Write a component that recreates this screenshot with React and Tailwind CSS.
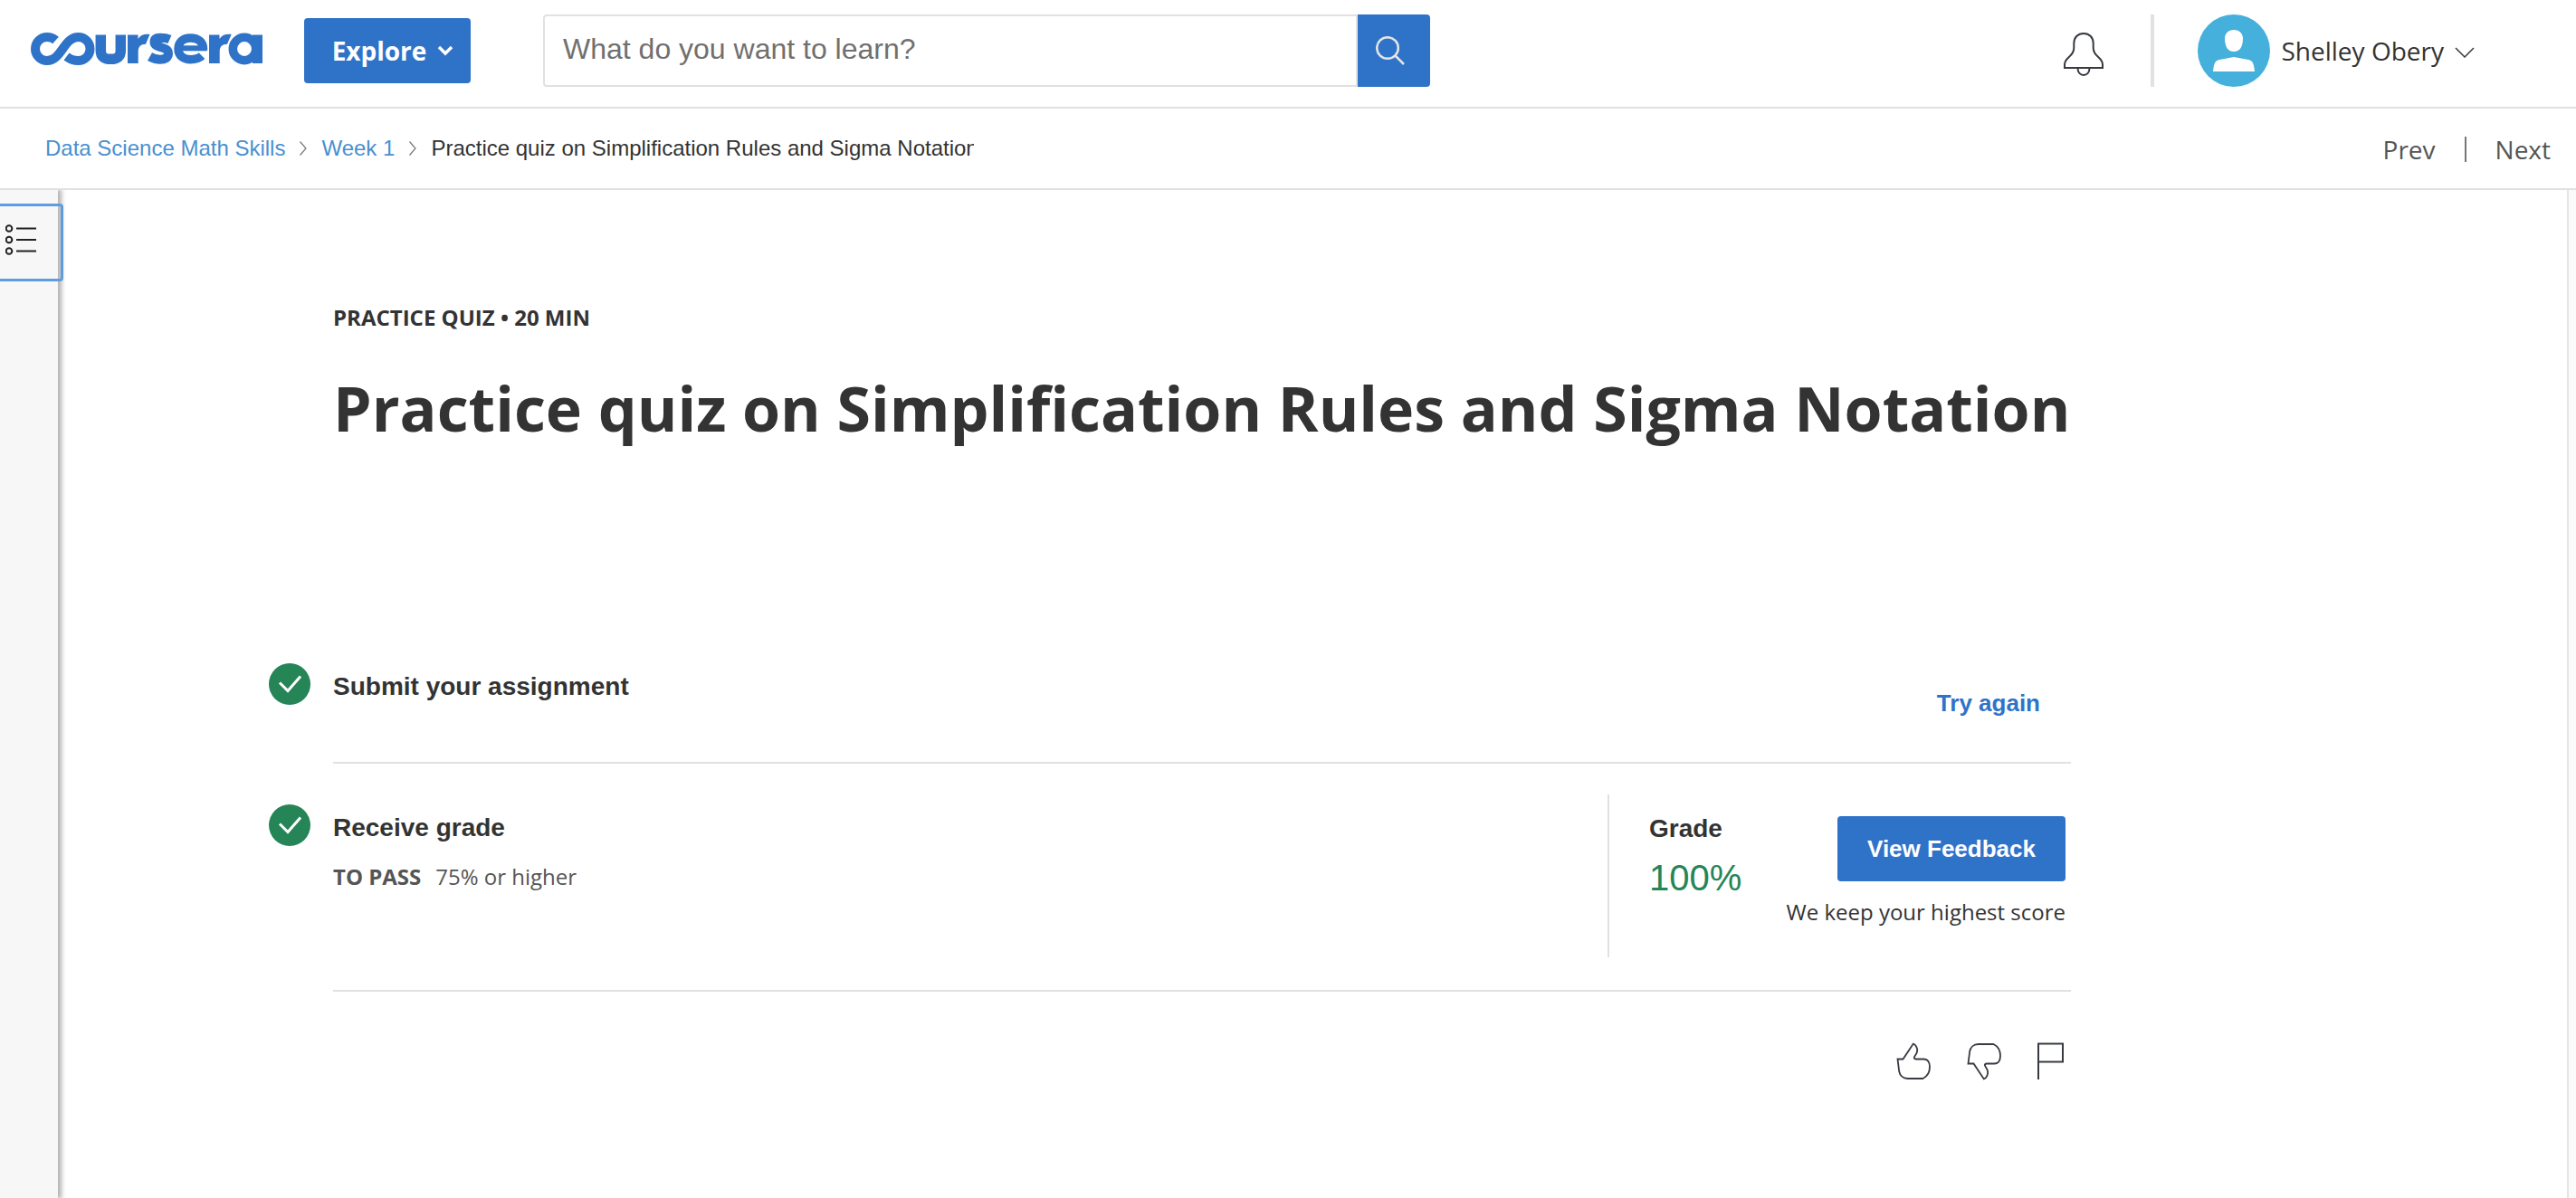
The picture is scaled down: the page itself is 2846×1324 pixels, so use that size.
function Logo() {
  return (
    <svg viewBox="0 0 256 36" className="h-9 w-64" fill="none" stroke="#2f73c9" aria-label="coursera" role="img">
      <path d="M27.500 8.500C25 6.200 22 5 18 5A13 13 0 1 0 18 31C34 31 36.500 5 52.500 5A13 13 0 1 1 52.500 31C47.500 31 43.500 29.500 39.500 26.500" strokeWidth="10" />
      <path d="M77.300 2.500V20c0 6.300 3.500 9.300 11 9.300s11-3 11-9.300V2.500" strokeWidth="11.500" />
      <path d="M107 2.500H118.500V7C121 3 125 1.300 131.500 2L127 12.700C121.500 12.700 118.700 15.500 118.700 21V34H107Z" fill="#2f73c9" stroke="none" />
      <path d="M153.500 7.500C150 6 146.500 5.700 143 5.700c-5 0-6.500 2-6.500 4.800 0 7.500 15.500 4 15.500 12.500 0 5-4 6.700-9 6.700-4 0-8-1-11.500-3" strokeWidth="10" />
      <path d="M190.500 19.500V18C190.500 10.500 185 6 176.500 6S163 10.500 163 18s5.500 11.700 13.500 11.700c5.500 0 9.500-1 12.500-4" strokeWidth="9.500" />
      <path d="M164 17.300H194.500" strokeWidth="6" />
      <path d="M197 2.500H208.500V7C211 3 215 1.300 221.700 2L217 12.700C211.500 12.700 208.700 15.500 208.700 21V34H197Z" fill="#2f73c9" stroke="none" />
      <circle cx="236" cy="18" r="12.700" strokeWidth="9.500" />
      <path d="M250.500 2.500V34" strokeWidth="11" />
    </svg>
  );
}

function Crumb() {
  return (
    <svg viewBox="0 0 8 16" className="h-4 w-2 shrink-0" fill="none" stroke="#777" strokeWidth="1.200" aria-hidden="true">
      <path d="M.5.5 7 8 .5 15.500" />
    </svg>
  );
}

function Check() {
  return (
    <svg viewBox="0 0 46 46" className="size-[46px] shrink-0" role="img" aria-label="Completed">
      <circle cx="23" cy="23" r="23" fill="#258557" />
      <path d="M12 21.500 21 30.500 35 14.500" fill="none" stroke="#fff" strokeWidth="3" />
    </svg>
  );
}

function Thumb({ down }) {
  return (
    <svg viewBox="0 0 38 42" className={down ? "h-[42px] w-[38px] -scale-y-100" : "h-[42px] w-[38px]"} fill="none" stroke="#373a41" strokeWidth="1.800" aria-hidden="true">
      <path d="M1.500 18.500H7.500L18.800 1.500C22 2.800 23.800 7 23 10.500 22.300 13.500 19.500 15.500 19.800 17.300 20 18.200 20.800 18.500 22 18.500H30.500C35 18.500 37 22.500 37 27 37 32.500 34.500 37.500 29.500 40H12.500C7.500 40 4 36.500 3.200 32Z" />
    </svg>
  );
}

export default function App() {
  return (
    <div className="flex min-h-screen flex-col bg-white font-['Open_Sans',sans-serif] text-[#333]">
      <header className="flex items-center border-b-2 border-[#e1e1e1] pt-4 pr-28 pb-[22px] pl-[34px]">
        <a href="#home" className="pb-1"><Logo /></a>
        <button className="ml-[46px] flex h-[72px] w-[184px] shrink-0 items-center justify-center gap-3 rounded bg-[#2f73c9] pl-3 text-[28px] font-bold text-white">
          Explore
          <svg viewBox="0 0 18 12" className="h-3 w-[18px]" fill="none" stroke="#fff" strokeWidth="3.500" aria-hidden="true"><path d="M2 2l7 7 7-7" /></svg>
        </button>
        <form className="ml-20 flex h-20 w-[980px]" role="search">
          <input type="text" aria-label="Search" placeholder="What do you want to learn?" className="min-w-0 flex-1 rounded-l border-2 border-[#e1e1e1] px-5 pb-1 font-['Liberation_Sans',Arial,sans-serif] text-[32px] placeholder:text-[#707070]" />
          <button type="button" aria-label="Search" className="flex w-20 items-center justify-center rounded-r bg-[#2f73c9]">
            <svg viewBox="0 0 32 32" className="mr-2 size-8" fill="none" stroke="#e5e5e5" strokeWidth="2.500" aria-hidden="true"><circle cx="13" cy="13" r="11.800" /><path d="M21.500 21.500 31 31" /></svg>
          </button>
        </form>
        <div className="ml-auto flex items-center">
          <button aria-label="Notifications" className="pt-2">
            <svg viewBox="0 0 44 48" className="h-12 w-11" fill="none" stroke="#373a41" strokeWidth="2" aria-hidden="true">
              <path d="M22 1C15.500 1 11.300 5.500 11.300 12V17C11.300 27 1 27 1 35.500V39H43V35.500C43 27 32.700 27 32.700 17V12C32.700 5.500 28.500 1 22 1ZM15.500 39c0 5 2.800 8 6.500 8s6.500-3 6.500-8" />
            </svg>
          </button>
          <div className="ml-[52px] h-20 w-1 bg-[#e1e1e1]" />
          <button className="ml-12 flex items-center text-[28px]">
            <svg viewBox="0 0 80 80" className="size-20" aria-hidden="true">
              <circle cx="40" cy="40" r="40" fill="#45b0db" />
              <path d="M40 17c-6 0-10 4-10 9.500C30 35 33 41 40 41s10-6 10-14.500C50 21 46 17 40 17ZM40 47l-16 3c-5 1-6 4-7 13h46c-1-9-2-12-7-13Z" fill="#fff" />
            </svg>
            <span className="ml-3">Shelley Obery</span>
            <svg viewBox="0 0 22 12" className="mt-1 ml-3 h-3 w-[22px]" fill="none" stroke="#373a41" strokeWidth="1.500" aria-hidden="true"><path d="M1 1l10 10L21 1" /></svg>
          </button>
        </div>
      </header>

      <div className="relative z-10 flex h-[90px] items-center justify-between border-b-2 border-[#e1e1e1] bg-white pr-7 pl-[50px]">
        <nav aria-label="Breadcrumb" className="flex w-[1026px] items-center gap-4 overflow-hidden font-['Liberation_Sans',Arial,sans-serif] text-[24px] whitespace-nowrap">
          <a href="#course" className="text-[#4a90cf]">Data Science Math Skills</a>
          <Crumb />
          <a href="#week" className="text-[#4a90cf]">Week 1</a>
          <Crumb />
          <span className="min-w-0 flex-1 overflow-hidden">Practice quiz on Simplification Rules and Sigma Notation</span>
        </nav>
        <div className="flex items-center gap-8 pt-0.5 text-[28px] text-[#555]">
          <a href="#prev">Prev</a>
          <div className="h-7 w-0.5 bg-[#777]" />
          <a href="#next">Next</a>
        </div>
      </div>

      <div className="flex flex-1">
        <aside className="w-16 shrink-0 bg-[#f7f7f7] pt-[15px] shadow-[3px_0_5px_1px_rgba(0,0,0,0.3)]">
          <button aria-label="Course outline" className="flex h-[86px] w-[70px] items-center rounded-r-sm border-y-[3px] border-r-[3px] border-[#5d9ce0] pb-[7px] pl-1.5">
            <svg viewBox="0 0 34 34" className="h-[34px] w-[34px]" fill="none" stroke="#222" strokeWidth="2" aria-hidden="true">
              <circle cx="4" cy="4.500" r="3.300" /><circle cx="4" cy="17" r="3.300" /><circle cx="4" cy="29.500" r="3.300" />
              <path d="M12 4.500h22M12 17h22M12 29.500h22" />
            </svg>
          </button>
        </aside>

        <main className="flex-1 pl-[304px]">
          <div className="max-w-[1920px]">
            <p className="mt-[125px] text-[24px] leading-8 font-bold">PRACTICE QUIZ • 20 MIN</p>
            <h1 className="mt-[38px] text-[68px] leading-[92px] font-bold whitespace-nowrap">Practice quiz on Simplification Rules and Sigma Notation</h1>

            <section className="mt-[236px] flex h-[111px] items-start justify-between border-b-2 border-[#e1e1e1] font-['Liberation_Sans',Arial,sans-serif]">
              <div className="-ml-[71px] flex items-start gap-[25px]">
                <Check />
                <h2 className="mt-2 text-[28px] leading-9 font-bold">Submit your assignment</h2>
              </div>
              <button className="mt-7 mr-[34px] text-[26px] leading-8 font-bold text-[#2f73c9]">Try again</button>
            </section>

            <section className="flex h-[252px] justify-between border-b-2 border-[#e1e1e1]">
              <div className="-ml-[71px] flex items-start gap-[25px] pt-[45px]">
                <Check />
                <div>
                  <h2 className="mt-2 font-['Liberation_Sans',Arial,sans-serif] text-[28px] leading-9 font-bold">Receive grade</h2>
                  <p className="mt-5 text-[24px] leading-8 text-[#555]"><strong className="mr-4">TO PASS</strong>75% or higher</p>
                </div>
              </div>
              <div className="mt-[34px] mr-1.5 flex h-[180px] w-[506px] justify-between border-l-2 border-[#e1e1e1] pl-11">
                <div className="font-['Liberation_Sans',Arial,sans-serif]">
                  <h2 className="mt-5 text-[28px] leading-9 font-bold">Grade</h2>
                  <p className="mt-3 text-[40px] leading-12 text-[#258557]">100%</p>
                </div>
                <div className="flex flex-col items-end pt-6">
                  <button className="h-[72px] w-[252px] rounded bg-[#2f73c9] font-['Liberation_Sans',Arial,sans-serif] text-[26px] font-bold text-white">View Feedback</button>
                  <p className="mt-[18px] text-[24px] leading-8">We keep your highest score</p>
                </div>
              </div>
            </section>

            <div className="mt-14 mr-[7px] flex justify-end gap-10">
              <button aria-label="Like"><Thumb /></button>
              <button aria-label="Dislike"><Thumb down /></button>
              <button aria-label="Report">
                <svg viewBox="0 0 30 42" className="h-[42px] w-[30px]" fill="none" stroke="#373a41" strokeWidth="2" aria-hidden="true"><path d="M1 41V1.500h27v20H1" /></svg>
              </button>
            </div>
          </div>
        </main>
        <div className="w-2.5 shrink-0 border-l-2 border-[#e5e5e5] bg-[#fafafa]" />
      </div>
    </div>
  );
}
